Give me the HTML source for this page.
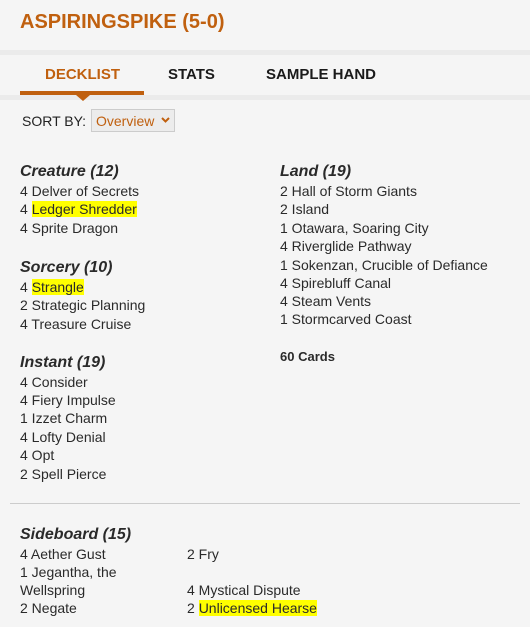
<!DOCTYPE html>
<html><head><meta charset="utf-8"><style>
body{margin:0;width:530px;height:636px;background:#fff;font-family:"Liberation Sans",sans-serif;color:#2a2a2a;overflow:hidden;position:relative}
.bg{position:absolute;left:0;top:0;width:530px;height:627px;background:#f5f5f5}
.a{position:absolute;white-space:nowrap;font-size:14px;line-height:18px}
.h{font-weight:bold;font-style:italic;font-size:16px}
.hl{background:#ffff00}
.strip{position:absolute;left:0;width:530px;height:5px;background:#ebebeb}
</style></head><body>
<div class="bg"></div>
<div class="a" style="left:20px;top:10px;font-size:20px;line-height:24px;font-weight:bold;color:#c0600f">ASPIRINGSPIKE (5-0)</div>
<div class="strip" style="top:50px"></div>
<div class="a" style="left:45px;top:66px;font-size:15px;font-weight:bold;color:#c0600f">DECKLIST</div>
<div class="a" style="left:168px;top:66px;font-size:15px;font-weight:bold;color:#1a1a1a">STATS</div>
<div class="a" style="left:266px;top:66px;font-size:15px;font-weight:bold;color:#1a1a1a">SAMPLE HAND</div>
<div class="strip" style="top:95px"></div>
<div style="position:absolute;left:20px;top:91px;width:124px;height:4px;background:#c0600f"></div>
<div style="position:absolute;left:76px;top:95px;width:0;height:0;border-left:7px solid transparent;border-right:7px solid transparent;border-top:6px solid #c0600f"></div>
<div class="a" style="left:22px;top:112px;font-size:14px;color:#222">SORT BY:</div>
<div style="position:absolute;left:91px;top:109px;width:82px;height:21px;border:1px solid #ccc;background:#ececec"></div>
<div class="a" style="left:96px;top:112px;font-size:14px;color:#c0600f">Overview</div>
<svg style="position:absolute;left:161px;top:117px" width="9" height="6"><path d="M1 1 L4.5 4.5 L8 1" fill="none" stroke="#c0600f" stroke-width="2"/></svg>

<div class="a h" style="left:20px;top:163px">Creature (12)</div>
<div class="a" style="left:20px;top:182px">4 Delver of Secrets</div>
<div class="a" style="left:20px;top:200px">4 <span class="hl">Ledger Shredder</span></div>
<div class="a" style="left:20px;top:219px">4 Sprite Dragon</div>
<div class="a h" style="left:20px;top:259px">Sorcery (10)</div>
<div class="a" style="left:20px;top:278px">4 <span class="hl">Strangle</span></div>
<div class="a" style="left:20px;top:296px">2 Strategic Planning</div>
<div class="a" style="left:20px;top:315px">4 Treasure Cruise</div>
<div class="a h" style="left:20px;top:354px">Instant (19)</div>
<div class="a" style="left:20px;top:373px">4 Consider</div>
<div class="a" style="left:20px;top:391px">4 Fiery Impulse</div>
<div class="a" style="left:20px;top:409px">1 Izzet Charm</div>
<div class="a" style="left:20px;top:428px">4 Lofty Denial</div>
<div class="a" style="left:20px;top:446px">4 Opt</div>
<div class="a" style="left:20px;top:465px">2 Spell Pierce</div>

<div class="a h" style="left:280px;top:163px">Land (19)</div>
<div class="a" style="left:280px;top:182px">2 Hall of Storm Giants</div>
<div class="a" style="left:280px;top:200px">2 Island</div>
<div class="a" style="left:280px;top:219px">1 Otawara, Soaring City</div>
<div class="a" style="left:280px;top:237px">4 Riverglide Pathway</div>
<div class="a" style="left:280px;top:256px">1 Sokenzan, Crucible of Defiance</div>
<div class="a" style="left:280px;top:274px">4 Spirebluff Canal</div>
<div class="a" style="left:280px;top:292px">4 Steam Vents</div>
<div class="a" style="left:280px;top:310px">1 Stormcarved Coast</div>
<div class="a" style="left:280px;top:348px;font-weight:bold;font-size:13px">60 Cards</div>

<div style="position:absolute;left:10px;top:503px;width:510px;height:1px;background:#ccc"></div>
<div class="a h" style="left:20px;top:526px">Sideboard (15)</div>
<div class="a" style="left:20px;top:545px">4 Aether Gust</div>
<div class="a" style="left:20px;top:563px">1 Jegantha, the</div>
<div class="a" style="left:20px;top:581px">Wellspring</div>
<div class="a" style="left:20px;top:599px">2 Negate</div>
<div class="a" style="left:187px;top:545px">2 Fry</div>
<div class="a" style="left:187px;top:581px">4 Mystical Dispute</div>
<div class="a" style="left:187px;top:599px">2 <span class="hl">Unlicensed Hearse</span></div>
</body></html>
